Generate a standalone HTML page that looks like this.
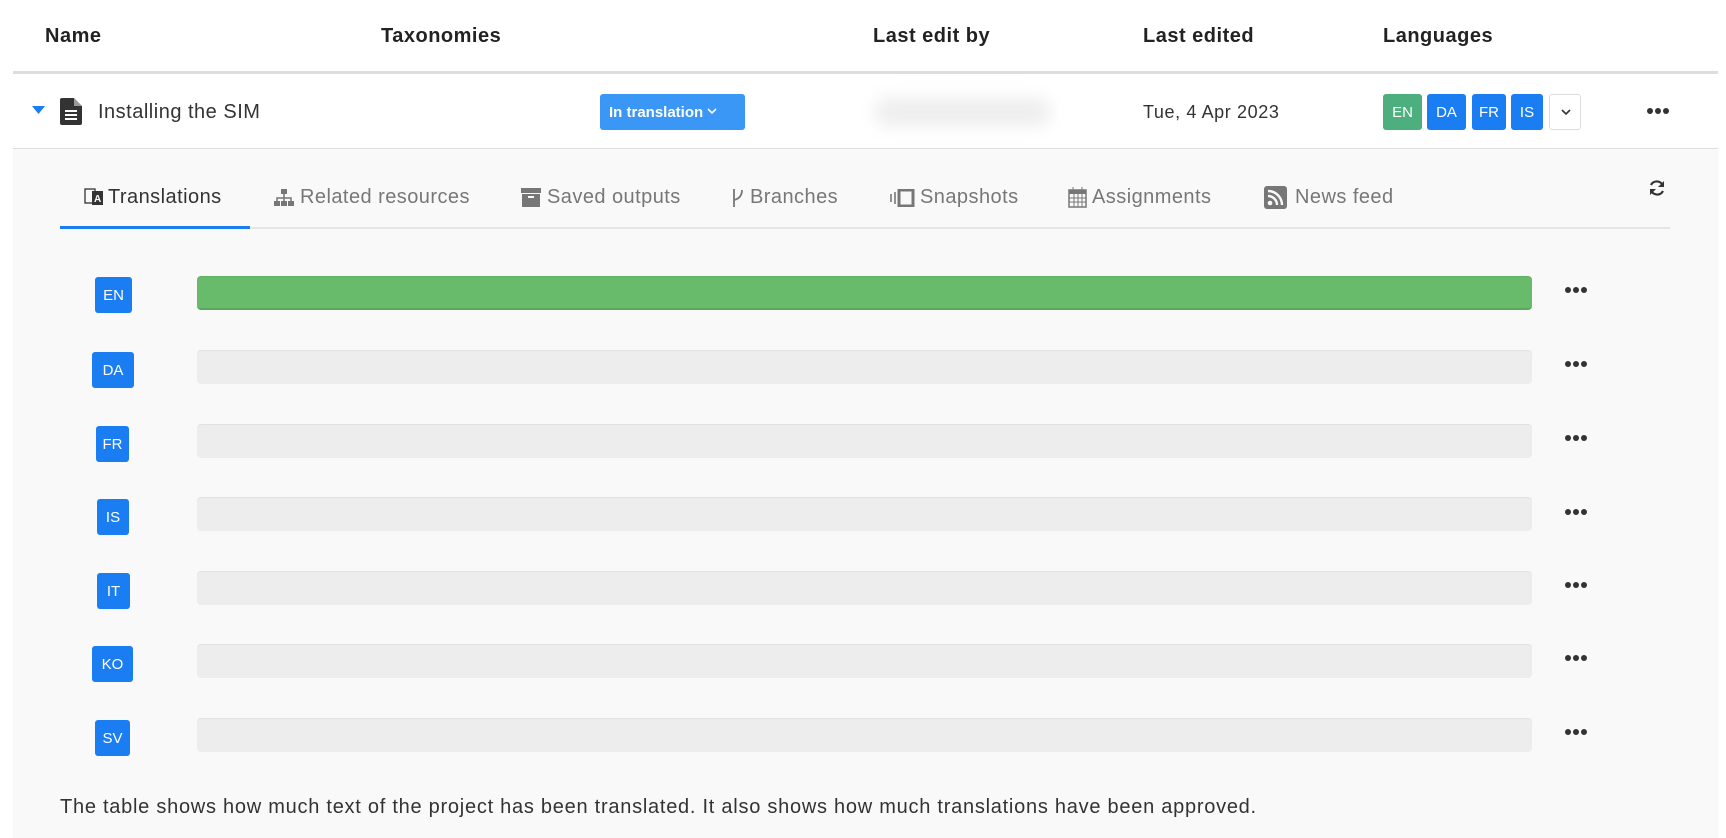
<!DOCTYPE html>
<html><head><meta charset="utf-8"><style>
*{margin:0;padding:0;box-sizing:border-box}
body{width:1726px;height:838px;background:#fff;font-family:"Liberation Sans",sans-serif;color:#333;position:relative;overflow:hidden}
.a{position:absolute;white-space:nowrap}
.h{font-weight:bold;font-size:20px;color:#222;top:25px;letter-spacing:0.5px}
.chip{position:absolute;height:36px;line-height:37px;color:#fff;background:#1a7ef2;border-radius:3px;font-size:15px;text-align:center}
.tab{position:absolute;top:186px;font-size:20px;color:#777;white-space:nowrap;letter-spacing:0.45px}
.bar{position:absolute;left:197px;width:1335px;height:34px;background:#ededed;border-radius:4px;box-shadow:inset 0 1px 1px rgba(0,0,0,.05)}
.dots{position:absolute;left:1565px;width:24px;height:8px}
.dots i,.md i{display:inline-block;width:6px;height:6px;border-radius:50%;background:#333;margin-right:2px}
</style></head><body>
<div class="a h" style="left:45px">Name</div>
<div class="a h" style="left:381px">Taxonomies</div>
<div class="a h" style="left:873px">Last edit by</div>
<div class="a h" style="left:1143px">Last edited</div>
<div class="a h" style="left:1383px">Languages</div>
<div class="a" style="left:13px;top:71px;width:1705px;height:3px;background:#ddd"></div>

<svg class="a" style="left:32px;top:106px" width="13" height="9"><path d="M0 0H13L6.5 8Z" fill="#1a7ef2"/></svg>
<svg class="a" style="left:60px;top:98px" width="22" height="27" viewBox="0 0 22 27"><path d="M0 2Q0 0 2 0H14L22 8V25Q22 27 20 27H2Q0 27 0 25Z" fill="#333"/><path d="M14 0V8H22" fill="#fff" opacity=".5"/><rect x="5" y="12" width="12" height="2" fill="#fff"/><rect x="5" y="16" width="12" height="2" fill="#fff"/><rect x="5" y="20" width="12" height="2" fill="#fff"/></svg>
<div class="a" style="left:98px;top:101px;font-size:20px;color:#333;letter-spacing:0.5px">Installing the SIM</div>
<div class="a" style="left:600px;top:94px;width:145px;height:36px;background:#3b97f5;border-radius:3px;color:#fff;font-weight:bold;font-size:15px;line-height:37px;padding-left:9px">In translation <svg width="10" height="7" style="vertical-align:2px"><path d="M1 1L5 5L9 1" stroke="#fff" stroke-width="1.6" fill="none"/></svg></div>
<div class="a" style="left:875px;top:98px;width:175px;height:28px;background:#eee;filter:blur(8px);border-radius:10px"></div>
<div class="a" style="left:1143px;top:102px;font-size:18px;color:#333;letter-spacing:0.6px">Tue, 4 Apr 2023</div>
<div class="chip" style="left:1383px;top:94px;width:39px;background:#4caf7d">EN</div>
<div class="chip" style="left:1427px;top:94px;width:39px">DA</div>
<div class="chip" style="left:1472px;top:94px;width:34px">FR</div>
<div class="chip" style="left:1511px;top:94px;width:32px">IS</div>
<div class="a" style="left:1549px;top:94px;width:32px;height:36px;border:1px solid #ddd;border-radius:3px;background:#fff"><svg style="position:absolute;left:11px;top:14px" width="10" height="7"><path d="M1 1L5 5L9 1" stroke="#333" stroke-width="1.6" fill="none"/></svg></div>
<div class="a md" style="left:1647px;top:108px;line-height:0"><i></i><i></i><i></i></div>
<div class="a" style="left:13px;top:148px;width:1705px;height:1px;background:#ddd"></div>

<div class="a" style="left:13px;top:149px;width:1705px;height:689px;background:#f9f9f9"></div>

<svg class="a" style="left:84px;top:187px" width="20" height="20" viewBox="0 0 20 20"><rect x="1" y="2" width="10" height="14" fill="none" stroke="#333" stroke-width="1.3"/><rect x="8" y="4" width="11" height="14" fill="#333"/><text x="10" y="15" font-size="10" fill="#fff" font-family="Liberation Sans" font-weight="bold">A</text></svg>
<div class="tab" style="left:108px;color:#333">Translations</div>
<svg class="a" style="left:274px;top:189px" width="20" height="18" viewBox="0 0 20 18"><rect x="7" y="0" width="6" height="5" fill="#777"/><path d="M10 5V9M3 12V9H17V12M10 9V12" stroke="#777" stroke-width="1.5" fill="none"/><rect x="0" y="12" width="6" height="5" fill="#777"/><rect x="7" y="12" width="6" height="5" fill="#777"/><rect x="14" y="12" width="6" height="5" fill="#777"/></svg>
<div class="tab" style="left:300px">Related resources</div>
<svg class="a" style="left:521px;top:188px" width="20" height="19" viewBox="0 0 20 19"><rect x="0" y="0" width="20" height="5" fill="#777"/><rect x="1" y="6" width="18" height="13" fill="#777"/><rect x="7" y="8" width="6" height="2" fill="#f9f9f9"/></svg>
<div class="tab" style="left:547px">Saved outputs</div>
<svg class="a" style="left:731px;top:188px" width="14" height="20" viewBox="0 0 14 20"><path d="M3 1V19M3 12Q11 10 11 2" stroke="#777" stroke-width="1.8" fill="none"/></svg>
<div class="tab" style="left:750px">Branches</div>
<svg class="a" style="left:889px;top:189px" width="26" height="18" viewBox="0 0 26 18"><path d="M2 5V13M6 3V15" stroke="#777" stroke-width="1.6"/><rect x="10" y="1" width="14" height="16" fill="none" stroke="#777" stroke-width="3"/></svg>
<div class="tab" style="left:920px">Snapshots</div>
<svg class="a" style="left:1068px;top:187px" width="19" height="21" viewBox="0 0 19 21"><rect x="1" y="3" width="17" height="17" fill="none" stroke="#777" stroke-width="1.5"/><rect x="1" y="3" width="17" height="4" fill="#777"/><path d="M5 0V5M14 0V5M1 11H18M1 15H18M6 7V20M10 7V20M14 7V20" stroke="#777" stroke-width="1"/></svg>
<div class="tab" style="left:1092px">Assignments</div>
<svg class="a" style="left:1264px;top:186px" width="23" height="23" viewBox="0 0 23 23"><rect width="23" height="23" rx="3" fill="#777"/><circle cx="6" cy="17" r="2.3" fill="#f9f9f9"/><path d="M4 10A9 9 0 0 1 13 19M4 5A14 14 0 0 1 18 19" stroke="#f9f9f9" stroke-width="2.4" fill="none"/></svg>
<div class="tab" style="left:1295px">News feed</div>
<svg class="a" style="left:1648px;top:179px" width="18" height="18" viewBox="0 0 18 18"><path d="M15 7A6.5 6.5 0 0 0 3 6M3 11A6.5 6.5 0 0 0 15 12" stroke="#333" stroke-width="2.2" fill="none"/><path d="M16 2V8H10Z M2 16V10H8Z" fill="#333"/></svg>

<div class="a" style="left:60px;top:227px;width:1610px;height:2px;background:#e5e5e5"></div>
<div class="a" style="left:60px;top:226px;width:190px;height:3px;background:#1a7ef2"></div>

<div class="chip" style="left:95px;top:277px;width:37px">EN</div>
<div class="bar" style="top:276px;background:#67bb6a;border-bottom:2px solid #5aa85d"></div>
<div class="dots md" style="top:287px;left:1565px;line-height:0"><i></i><i></i><i></i></div>

<div class="chip" style="left:92px;top:352px;width:42px">DA</div>
<div class="bar" style="top:350px"></div>
<div class="dots md" style="top:361px;line-height:0"><i></i><i></i><i></i></div>

<div class="chip" style="left:96px;top:426px;width:33px">FR</div>
<div class="bar" style="top:424px"></div>
<div class="dots md" style="top:435px;line-height:0"><i></i><i></i><i></i></div>

<div class="chip" style="left:97px;top:499px;width:32px">IS</div>
<div class="bar" style="top:497px"></div>
<div class="dots md" style="top:509px;line-height:0"><i></i><i></i><i></i></div>

<div class="chip" style="left:97px;top:573px;width:33px">IT</div>
<div class="bar" style="top:571px"></div>
<div class="dots md" style="top:582px;line-height:0"><i></i><i></i><i></i></div>

<div class="chip" style="left:92px;top:646px;width:41px">KO</div>
<div class="bar" style="top:644px"></div>
<div class="dots md" style="top:655px;line-height:0"><i></i><i></i><i></i></div>

<div class="chip" style="left:95px;top:720px;width:35px">SV</div>
<div class="bar" style="top:718px"></div>
<div class="dots md" style="top:729px;line-height:0"><i></i><i></i><i></i></div>

<div class="a" style="left:60px;top:796px;font-size:20px;color:#333;letter-spacing:0.74px">The table shows how much text of the project has been translated. It also shows how much translations have been approved.</div>
</body></html>
